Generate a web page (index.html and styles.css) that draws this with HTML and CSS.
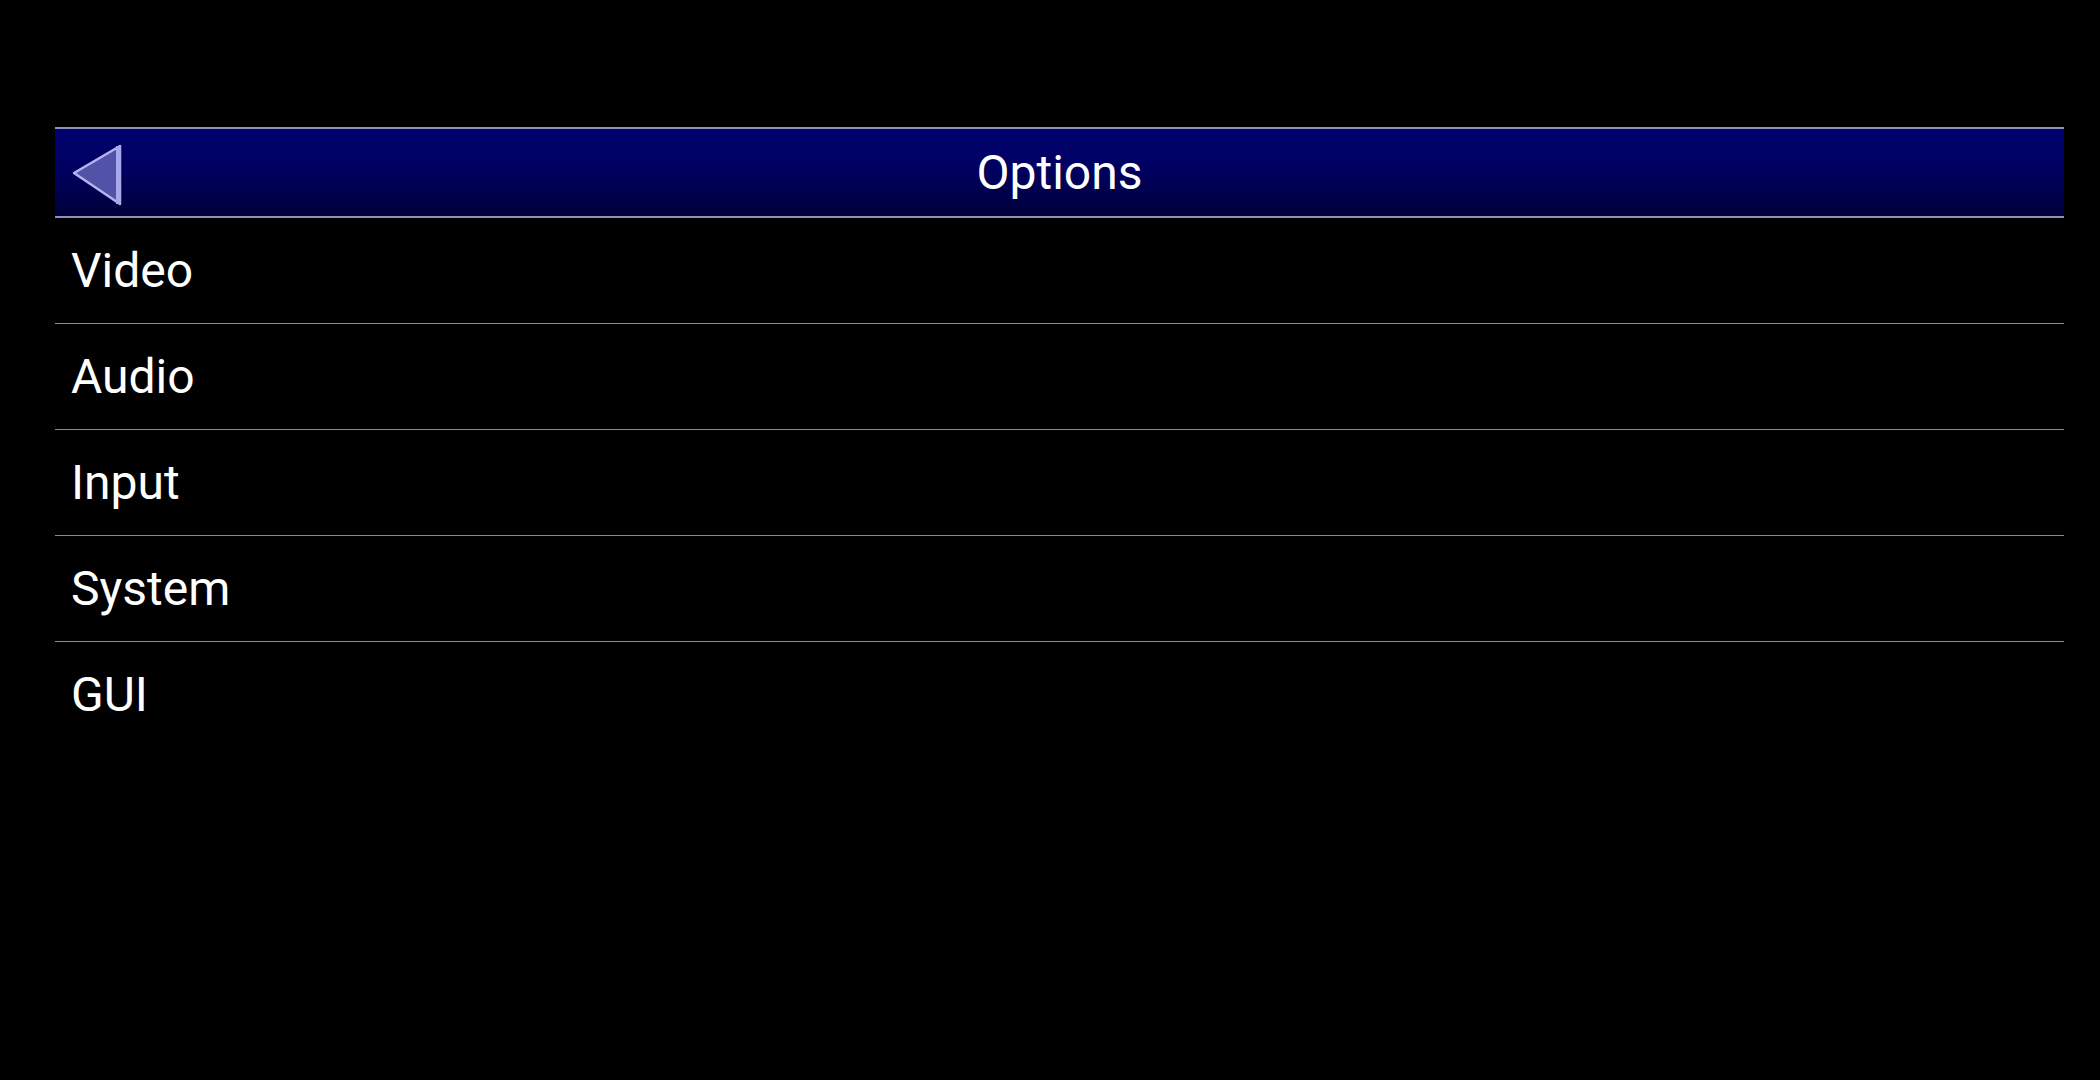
FILE: index.html
```html
<!DOCTYPE html>
<html lang="en">
<head>
  <meta charset="UTF-8">
  <meta name="viewport" content="width=device-width, initial-scale=1.0">
  <title>Options</title>
  <link rel="stylesheet" href="styles.css">
</head>
<body>
  <div class="menu">
    <div class="menu-header">
      <a href="#" class="back-btn" aria-label="Back">
        <svg width="54" height="64" viewBox="0 0 54 64">
          <polygon points="3,30 49,3 49,61" fill="#5252a8" stroke="#b4b4f2" stroke-width="2.5" stroke-linejoin="round"/>
          <rect x="45" y="3" width="5" height="58" fill="#a8a8ec"/>
        </svg>
      </a>
      <h1>Options</h1>
    </div>
    <ul class="menu-list">
      <li>Video</li>
      <li>Audio</li>
      <li>Input</li>
      <li>System</li>
      <li class="last">GUI</li>
    </ul>
  </div>
</body>
</html>
```

FILE: styles.css
```css
body {
  margin: 0;
  padding: 0;
  background-color: #000;
  color: #fff;
  font-family: Roboto, "Noto Sans", sans-serif;
}
.menu {
  margin: 127px 36px 0 55px;
}
.menu-header {
  position: relative;
  height: 87px;
  border-top: 2px solid #9090b8;
  border-bottom: 2px solid #9090b8;
  background: linear-gradient(#000070, #000062 45%, #00003a);
  display: flex;
  align-items: center;
  justify-content: center;
}
.menu-header h1 {
  margin: 0;
  font-size: 48px;
  font-weight: normal;
  line-height: 1;
}
.back-btn {
  position: absolute;
  left: 16px;
  top: 14px;
  display: block;
  line-height: 0;
}
.menu-list {
  list-style: none;
  margin: 0;
  padding: 0;
}
.menu-list li {
  height: 105px;
  border-bottom: 1px solid #8c8c8c;
  padding-left: 16px;
  font-size: 48px;
  display: flex;
  align-items: center;
}
.menu-list li.last {
  border-bottom: none;
}
```
